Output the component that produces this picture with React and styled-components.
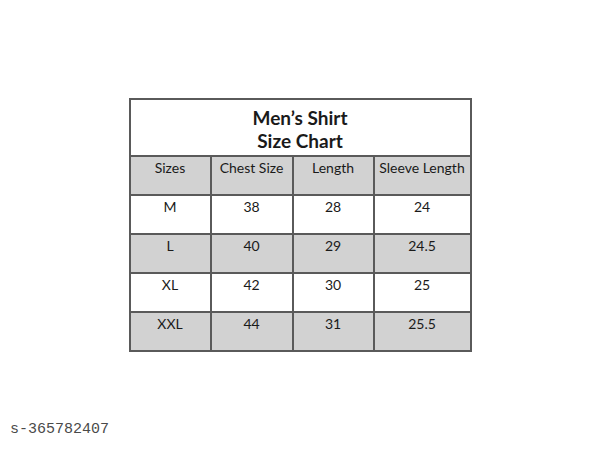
import styled, { createGlobalStyle } from "styled-components"

const GlobalStyle = createGlobalStyle`
    html, body {
        margin: 0;
        padding: 0;
        background: #ffffff;
    }
`

const Page = styled.div`
    width: 600px;
    height: 450px;
    display: flex;
    flex-direction: column;
    align-items: center;
    padding-top: 98px;
    box-sizing: border-box;
    font-family: Lato, "Open Sans", sans-serif;
    color: #1a1a1a;
`

const Chart = styled.table`
    border-collapse: collapse;
    border: 2px solid #5a5a5a;
    table-layout: fixed;
`

const TitleCell = styled.th`
    height: 57px;
    padding: 6px 0 0;
    box-sizing: border-box;
    vertical-align: top;
    font-size: 19px;
    font-weight: 700;
    line-height: 23px;
    background: #ffffff;
    border: 2px solid #5a5a5a;
`

const Cell = styled.td`
    width: ${props => props.w}px;
    height: ${props => props.h || 36}px;
    padding: 0;
    box-sizing: border-box;
    vertical-align: top;
    text-align: center;
    font-size: 14px;
    line-height: 22px;
    background: ${props => (props.shade ? "#d2d2d2" : "#ffffff")};
    border: 2px solid #5a5a5a;
`

const Footer = styled.div`
    align-self: flex-start;
    margin: auto 0 12px 10px;
    font-family: "Liberation Mono", monospace;
    font-size: 15px;
    color: #4a4a4a;
`

const widths = [81, 82, 81, 97]
const headers = ["Sizes", "Chest Size", "Length", "Sleeve Length"]
const rows = [
    ["M", "38", "28", "24"],
    ["L", "40", "29", "24.5"],
    ["XL", "42", "30", "25"],
    ["XXL", "44", "31", "25.5"],
]

const App = () => {
    return (
        <Page>
            <GlobalStyle />
            <Chart>
                <thead>
                    <tr>
                        <TitleCell colSpan={4}>
                            Men’s Shirt
                            <br />
                            Size Chart
                        </TitleCell>
                    </tr>
                </thead>
                <tbody>
                    <tr>
                        {headers.map((h, i) => (
                            <Cell key={h} w={widths[i]} h={39} shade>{h}</Cell>
                        ))}
                    </tr>
                    {rows.map((row, r) => (
                        <tr key={row[0]}>
                            {row.map((v, i) => (
                                <Cell key={i} w={widths[i]} h={39} shade={r % 2 === 1}>{v}</Cell>
                            ))}
                        </tr>
                    ))}
                </tbody>
            </Chart>
            <Footer>s-365782407</Footer>
        </Page>
    )
}

export default App
